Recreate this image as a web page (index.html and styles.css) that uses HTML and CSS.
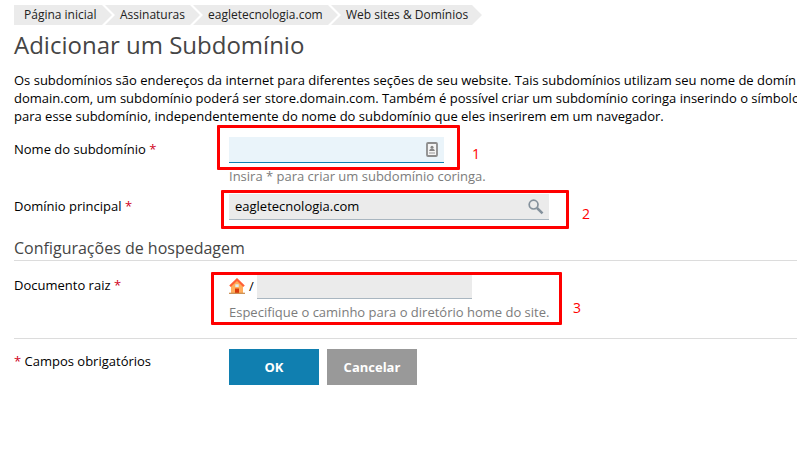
FILE: index.html
```html
<!DOCTYPE html>
<html lang="pt-BR">
<head>
<meta charset="utf-8">
<title>Adicionar um Subdomínio</title>
<link rel="stylesheet" href="styles.css">
</head>
<body>
<main class="page">
  <nav class="crumbs">
    <a class="crumb crumb-first">Página inicial</a>
    <a class="crumb crumb-subs">Assinaturas</a>
    <a class="crumb crumb-domain">eagletecnologia.com</a>
    <a class="crumb crumb-sites">Web sites &amp; Domínios</a>
  </nav>
  <h1 class="title">Adicionar um Subdomínio</h1>
  <div class="intro">
    <div class="line">Os subdomínios são endereços da internet para diferentes seções de seu website. Tais subdomínios utilizam seu nome de domín</div>
    <div class="line">domain.com, um subdomínio poderá ser store.domain.com. Também é possível criar um subdomínio coringa inserindo o símbolo</div>
    <div class="line">para esse subdomínio, independentemente do nome do subdomínio que eles inserirem em um navegador.</div>
  </div>

  <div class="row row-name">
    <div class="label">Nome do subdomínio <b class="req">*</b></div>
    <div class="control">
      <div class="field field-active">
        <svg class="contact" width="12" height="15" viewBox="0 0 12 15">
          <rect x="1" y="1" width="10" height="13" rx="1" fill="#f4f4f4" stroke="#8c8c8c" stroke-width="1.8"/>
          <circle cx="6" cy="5.2" r="1.5" fill="#858585"/>
          <path d="M3.3 9V8l1.5-1.2h2.4L8.7 8v1z" fill="#858585"/>
          <path d="M3 11h6" stroke="#999"/>
        </svg>
      </div>
      <div class="hint hint-name">Insira * para criar um subdomínio coringa.</div>
      <div class="mark mark-one"><span class="number">1</span></div>
    </div>
  </div>

  <div class="row row-domain">
    <div class="label">Domínio principal <b class="req">*</b></div>
    <div class="control">
      <div class="field field-wide"><span class="value">eagletecnologia.com</span>
        <svg class="lens" width="16" height="16" viewBox="0 0 16 16" fill="none" stroke="#84919c">
          <circle cx="5.6" cy="5.6" r="4.4" stroke-width="1.7"/>
          <path d="M9 9l5.5 5.3" stroke-width="2.5"/>
        </svg>
      </div>
      <div class="mark mark-two"><span class="number">2</span></div>
    </div>
  </div>

  <h2 class="section">Configurações de hospedagem</h2>

  <div class="row row-root">
    <div class="label">Documento raiz <b class="req">*</b></div>
    <div class="control">
      <div class="path">
        <svg class="home" width="16" height="16" viewBox="0 0 16 16">
          <path d="M2 7.5L8 2l6 5.5V15H2z" fill="#ffad5c"/>
          <path d="M1 8.3L8 1.5l7 6.8" fill="none" stroke="#ff6036" stroke-width="2.2"/>
          <path d="M6.3 6.3h3.4V9H6.3z" fill="#dceef6"/>
          <path d="M6 10.5h4V15H6z" fill="#d93a0b"/>
          <path d="M0 15.3h16" stroke="#c88746" stroke-width="1.2"/>
        </svg>
        <span class="slash">/</span>
        <div class="field"></div>
      </div>
      <div class="hint hint-root">Especifique o caminho para o diretório home do site.</div>
      <div class="mark mark-three"><span class="number">3</span></div>
    </div>
  </div>

  <div class="row row-actions">
    <div class="label"><b class="req">*</b> Campos obrigatórios</div>
    <div class="control buttons">
      <button class="button button-ok">OK</button>
      <button class="button button-cancel">Cancelar</button>
    </div>
  </div>
</main>
</body>
</html>
```
FILE: styles.css
```css
* { box-sizing: border-box; }
body {
  margin: 0;
  background: #fff;
  color: #000;
  font: 13px/18px "Open Sans", sans-serif;
  overflow: hidden;
}
.page { padding: 5px 0 0 14px; height: 466px; overflow: hidden; }

.crumbs { display: flex; height: 20px; }
.crumb {
  flex: none;
  padding-left: 15px;
  margin-left: -7px;
  background: #ebebeb;
  color: #222;
  font-size: 12px;
  line-height: 20px;
  white-space: nowrap;
  clip-path: polygon(0 0, calc(100% - 10px) 0, 100% 50%, calc(100% - 10px) 100%, 0 100%, 10px 50%);
}
.crumb-first {
  width: 98px;
  margin-left: 0;
  padding-left: 10px;
  clip-path: polygon(0 0, calc(100% - 10px) 0, 100% 50%, calc(100% - 10px) 100%, 0 100%);
}
.crumb-subs { width: 95px; }
.crumb-domain { width: 145px; }
.crumb-sites { width: 151px; }

.title {
  margin: 3px 0 0;
  height: 34px;
  color: #454545;
  font-size: 24px;
  font-weight: 400;
  line-height: 34px;
}
.intro { margin-top: 9px; }
.line { white-space: nowrap; }

.row { display: flex; }
.label { width: 215px; flex: none; white-space: nowrap; }
.req { color: #d0021b; font-weight: 400; }
.control { position: relative; flex: 1; }
.field {
  display: flex;
  align-items: center;
  width: 215px;
  height: 26px;
  background: #ebebeb;
  border-bottom: 1px solid #a9b6c0;
}
.field-active { background: #eaf4fa; border-color: #1080b2; justify-content: flex-end; padding-right: 6px; }
.field-wide { width: 320px; justify-content: space-between; padding: 0 5px 0 6px; }
.value { position: relative; top: -1px; }
.hint { color: #7c7c7c; white-space: nowrap; }

.row-name { height: 69px; padding-top: 12px; }
.row-name .label { padding-top: 3px; }
.hint-name { margin-top: 4px; }
.row-domain { height: 38px; }
.row-domain .label { padding-top: 3px; }

.section {
  margin: 0;
  height: 29px;
  border-bottom: 1px solid #dcdcdc;
  color: #454545;
  font-size: 16px;
  font-weight: 400;
  line-height: 32px;
}
.row-root { height: 78px; padding-top: 12px; border-bottom: 1px solid #dcdcdc; }
.row-root .label { padding-top: 3px; }
.path { display: flex; align-items: center; }
.slash { width: 12px; padding-left: 4px; }
.hint-root { margin-top: 4px; }

.row-actions { padding-top: 10px; }
.row-actions .label { padding-top: 3px; }
.buttons { display: flex; gap: 8px; }
.button {
  width: 90px;
  height: 36px;
  padding: 0;
  border: 0;
  color: #fff;
  font: 700 13px/36px "Open Sans", sans-serif;
}
.button-ok { background: #107fb0; }
.button-cancel { background: #999; }

/* Numbered step markers laid over the form */
.mark {
  position: absolute;
  border: 3px solid #f00;
  border-radius: 1px;
}
.mark-one { left: -12px; top: -12px; width: 243px; height: 45px; }
.mark-two { left: -8px; top: -4px; width: 348px; height: 39px; }
.mark-three { left: -18px; top: -1px; width: 351px; height: 53px; }
.number { position: absolute; left: 100%; color: #f00; font-size: 14px; }
.mark-one .number { margin-left: 15px; top: 17px; }
.mark-two .number { margin-left: 16px; top: 12px; }
.mark-three .number { margin-left: 14px; top: 24px; }
```
